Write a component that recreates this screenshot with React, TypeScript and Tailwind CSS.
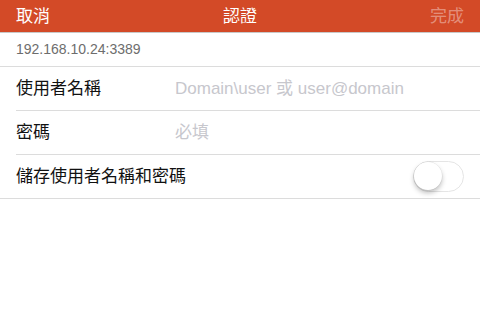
export default function App() {
  const font = { fontFamily: '"Liberation Sans", "Noto Sans CJK TC", sans-serif' };
  return (
    <div className="w-[480px] h-[320px] bg-white overflow-hidden" style={font}>
      <div className="h-[32px] bg-[#d34a27] flex items-center justify-between px-4 relative">
        <span className="text-white text-[17px] leading-none">取消</span>
        <span className="absolute left-1/2 -translate-x-1/2 text-white text-[17px] leading-none">認證</span>
        <span className="text-white/40 text-[17px] leading-none">完成</span>
      </div>
      <div className="h-[1px] bg-[#c8c8c8]" />
      <div className="h-[34px] flex items-center px-4 text-[14px] text-[#6d6d6d] border-b border-[#dcdcdc]">
        192.168.10.24:3389
      </div>
      <div className="pl-4">
        <div className="h-[44px] flex items-center border-b border-[#dcdcdc]">
          <span className="w-[159px] text-[17px] text-[#111]">使用者名稱</span>
          <span className="text-[17px] text-[#c7c7cd]">Domain\user 或 user@domain</span>
        </div>
        <div className="h-[44px] flex items-center border-b border-[#dcdcdc]">
          <span className="w-[159px] text-[17px] text-[#111]">密碼</span>
          <span className="text-[17px] text-[#c7c7cd]">必填</span>
        </div>
      </div>
      <div className="h-[44px] flex items-center justify-between pl-4 pr-4 border-b border-[#dcdcdc]">
        <span className="text-[17px] text-[#111]">儲存使用者名稱和密碼</span>
        <div className="w-[51px] h-[31px] rounded-full border-[1.5px] border-[#e5e5e5] bg-white relative">
          <div className="absolute left-0 top-0 w-[28px] h-[28px] rounded-full bg-white shadow-[0_3px_5px_rgba(0,0,0,0.25),0_0_0_0.5px_rgba(0,0,0,0.08)]" />
        </div>
      </div>
    </div>
  );
}
